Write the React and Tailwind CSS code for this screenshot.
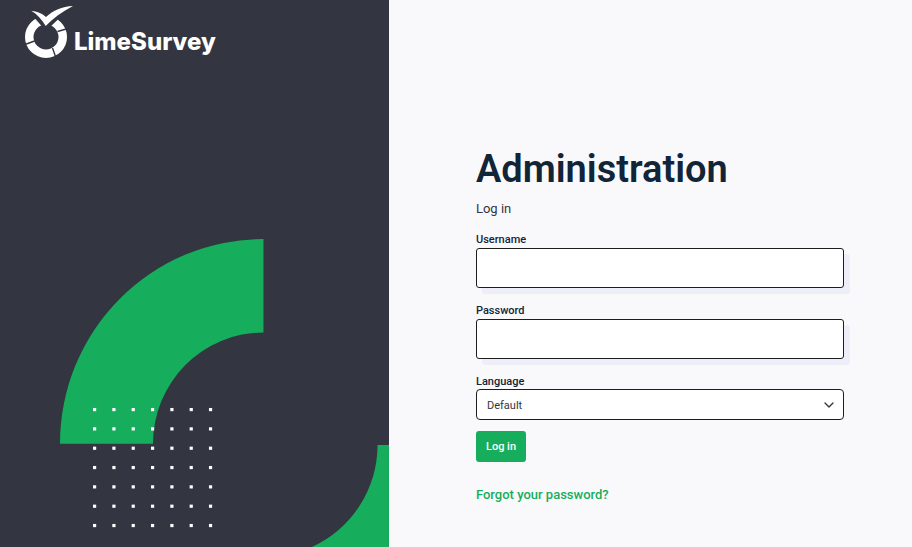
import { ChevronDown } from "lucide-react";

const steps = [0, 1, 2, 3, 4, 5, 6];

function Logo() {
  return (
    <div className="flex items-start pl-6 pt-1 text-white">
      <svg className="h-[56px] w-[50px] shrink-0" viewBox="24 4 50 56" aria-hidden="true">
        <circle cx="46" cy="37" r="16.75" fill="none" stroke="#fff" strokeWidth="8.5" />
        <path d="M46 31L31 14V4H61V16.500Z" fill="#333641" />
        <path
          d="M25 44.5L34.5 41M52.5 48L56 58M57.5 31.5L68 28.5"
          stroke="#333641"
          strokeWidth="1.4"
        />
        <path
          d="M31.300 10.800C37 11.500 42 13.500 46 17C53 10.500 62 6.300 73 6C62 11.500 53 18.500 45.700 26C42 20 37.500 14.500 31.300 10.800Z"
          fill="#fff"
        />
      </svg>
      <span className="mt-6 font-['Inter',sans-serif] text-[24px] font-extrabold leading-7">
        LimeSurvey
      </span>
    </div>
  );
}

function Artwork() {
  return (
    <svg className="mt-auto block w-full" viewBox="0 238 389 309" aria-hidden="true">
      <g fill="#16ae5c">
        <path d="M263.500 239V332.500A110.500 111.200 0 0 0 153 443.700H60A203.500 204.700 0 0 1 263.500 239Z" />
        <path d="M377.600 445H389V547H312A112 112 0 0 0 377.600 445Z" />
      </g>
      <g fill="#fff">
        {steps.map((row) =>
          steps.map((col) => (
            <rect
              key={`${row}-${col}`}
              x={93 + col * 19.33}
              y={408 + row * 19.33}
              width="3.2"
              height="3.2"
            />
          ))
        )}
      </g>
    </svg>
  );
}

function Field({ id, label, type }) {
  return (
    <div className="mb-[15px]">
      <label htmlFor={id} className="block text-[11px] font-medium leading-4 text-[#122538]">
        {label}
      </label>
      <input
        id={id}
        name={id}
        type={type}
        className="block h-10 w-full rounded-[3px] border border-[#1e1e1e] bg-white px-2.5 text-[11px] shadow-[6px_6px_0_#eeeef8] outline-none"
      />
    </div>
  );
}

export default function App() {
  return (
    <div className="flex min-h-screen bg-[#f9f9fb] font-['Roboto','Noto_Sans',sans-serif]">
      <aside className="flex w-[42.65%] flex-col bg-[#333641]">
        <Logo />
        <Artwork />
      </aside>
      <main className="flex-1 pb-8 pl-[87px] pr-[68px] pt-36">
        <h1 className="text-[38px] font-semibold leading-[50px] text-[#122538]">Administration</h1>
        <p className="mb-3.5 mt-1.5 text-[13px] leading-[18px] text-[#333641]">Log in</p>
        <form onSubmit={(event) => event.preventDefault()}>
          <Field id="username" label="Username" type="text" />
          <Field id="password" label="Password" type="password" />
          <label htmlFor="language" className="block text-[11px] font-medium leading-[15px] text-[#122538]">
            Language
          </label>
          <div className="relative">
            <select
              id="language"
              className="block h-[31px] w-full appearance-none rounded-[4px] border border-[#1e1e1e] bg-white pl-2.5 pr-8 pt-1 text-[11px] text-[#333641] outline-none"
            >
              <option>Default</option>
            </select>
            <ChevronDown
              className="pointer-events-none absolute inset-y-0 right-[7px] my-auto h-4 w-4 text-[#333641]"
              strokeWidth={2}
              aria-hidden="true"
            />
          </div>
          <button
            type="submit"
            className="mt-[11px] block h-[31px] rounded-[3px] bg-[#16ae5c] px-2.5 pt-0.5 text-[11px] font-medium text-white"
          >
            Log in
          </button>
        </form>
        <a href="#forgot" className="mt-6 inline-block text-[13px] font-medium leading-[18px] text-[#16ae5c]">
          Forgot your password?
        </a>
      </main>
    </div>
  );
}
